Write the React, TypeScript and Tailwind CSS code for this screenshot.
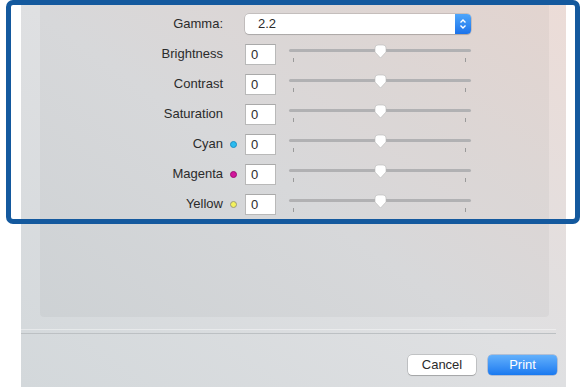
import React from 'react';

const rows = [
  { label: 'Brightness', dot: '' },
  { label: 'Contrast', dot: '' },
  { label: 'Saturation', dot: '' },
  { label: 'Cyan', dot: 'cyan' },
  { label: 'Magenta', dot: 'magenta' },
  { label: 'Yellow', dot: 'yellow' },
];

function Dot({ kind }: { kind: string }) {
  if (kind === 'cyan') return <span className="block w-[7px] h-[7px] rounded-full bg-[#2bbcf0] border border-[#1c8fc4]" />;
  if (kind === 'magenta') return <span className="block w-[7px] h-[7px] rounded-full bg-[#d2169c] border border-[#9c0f74]" />;
  if (kind === 'yellow') return <span className="block w-[7px] h-[7px] rounded-full bg-[#f3f25c] border border-[#9a9a7a]" />;
  return null;
}

function Slider() {
  return (
    <div className="relative w-[182px] h-[30px]">
      {/* track */}
      <div className="absolute left-0 right-0 top-[10px] h-[3px] rounded-full bg-[#b1b1b3]" />
      {/* ticks */}
      <div className="absolute left-[4px] top-[19px] w-px h-[4px] bg-[#9a9a9a]" />
      <div className="absolute left-[176px] top-[19px] w-px h-[4px] bg-[#9a9a9a]" />
      {/* thumb */}
      <svg className="absolute left-[85px] top-[5px]" width="13" height="15" viewBox="0 0 13 15">
        <path
          d="M1 4 Q1 1 4 1 H9 Q12 1 12 4 V8 L6.5 14 L1 8 Z"
          fill="#ffffff"
          stroke="#b8b8b8"
          strokeWidth="0.6"
        />
      </svg>
    </div>
  );
}

export default function App() {
  return (
    <div
      className="relative w-[582px] h-[387px] overflow-hidden bg-white text-[13px] text-[#2b2b2b]"
      style={{ fontFamily: '"Liberation Sans", Arial, sans-serif' }}
    >
      {/* Dialog */}
      <div className="ml-[21px] w-[545px] h-[387px] flex flex-col bg-linear-to-bl from-[#ecdcd7] via-[#dfe0e2] to-[#d3d8db]">
        {/* Inner panel */}
        <div className="ml-[19px] mr-[17px] h-[317px] rounded-b-[4px] bg-black/[0.035] pt-[9px]">
          {/* Gamma */}
          <div className="flex items-center h-[30px]">
            <div className="w-[184px] text-right pr-px">Gamma:</div>
            <div className="w-[21px]" />
            <div className="relative flex items-center w-[226px] h-[20px] rounded-[4px] bg-white shadow-[0_0_0_0.5px_rgba(0,0,0,0.22),0_1px_1px_rgba(0,0,0,0.12)]">
              <span className="pl-[13px]">2.2</span>
              <div className="absolute right-0 top-0 bottom-0 w-[16px] rounded-r-[4px] bg-linear-to-b from-[#4ea6fb] to-[#1b72ea] flex items-center justify-center">
                <svg width="10" height="14" viewBox="0 0 10 14">
                  <path d="M2.5 5.5 L5 3 L7.5 5.5" fill="none" stroke="#fff" strokeWidth="1.4" />
                  <path d="M2.5 8.5 L5 11 L7.5 8.5" fill="none" stroke="#fff" strokeWidth="1.4" />
                </svg>
              </div>
            </div>
          </div>

          {rows.map((r) => (
            <div key={r.label} className="flex items-center h-[30px]">
              <div className="w-[184px] text-right pr-px">{r.label}</div>
              <div className="w-[21px] flex items-center pl-[6px]">
                <Dot kind={r.dot} />
              </div>
              <div className="w-[31px] h-[21px] bg-white border border-[#b9b9b9] border-t-[#a9a9a9] pl-[5px] leading-[19px]">
                0
              </div>
              <div className="ml-[13px]">
                <Slider />
              </div>
            </div>
          ))}
        </div>

        {/* Separator */}
        <div className="mt-[12px] mr-[10px] h-[5px] border-t border-t-white/40 border-b border-b-[#bcc0c3]" />

        {/* Buttons */}
        <div className="mt-[21px] flex justify-end gap-[12px] pr-[9px]">
          <button className="w-[68px] h-[20px] rounded-[4px] bg-white text-[#2b2b2b] shadow-[0_0_0_0.5px_rgba(0,0,0,0.25),0_1px_1px_rgba(0,0,0,0.15)]">
            Cancel
          </button>
          <button className="w-[69px] h-[20px] rounded-[4px] bg-linear-to-b from-[#62b0fb] to-[#1879f0] text-white shadow-[0_0_0_0.5px_rgba(0,60,160,0.4)]">
            Print
          </button>
        </div>
      </div>

      {/* Highlight frame */}
      <div className="absolute left-[6px] top-0 w-[574px] h-[224px] rounded-[7px] border-[5px] border-[#14599e] pointer-events-none" />
    </div>
  );
}
